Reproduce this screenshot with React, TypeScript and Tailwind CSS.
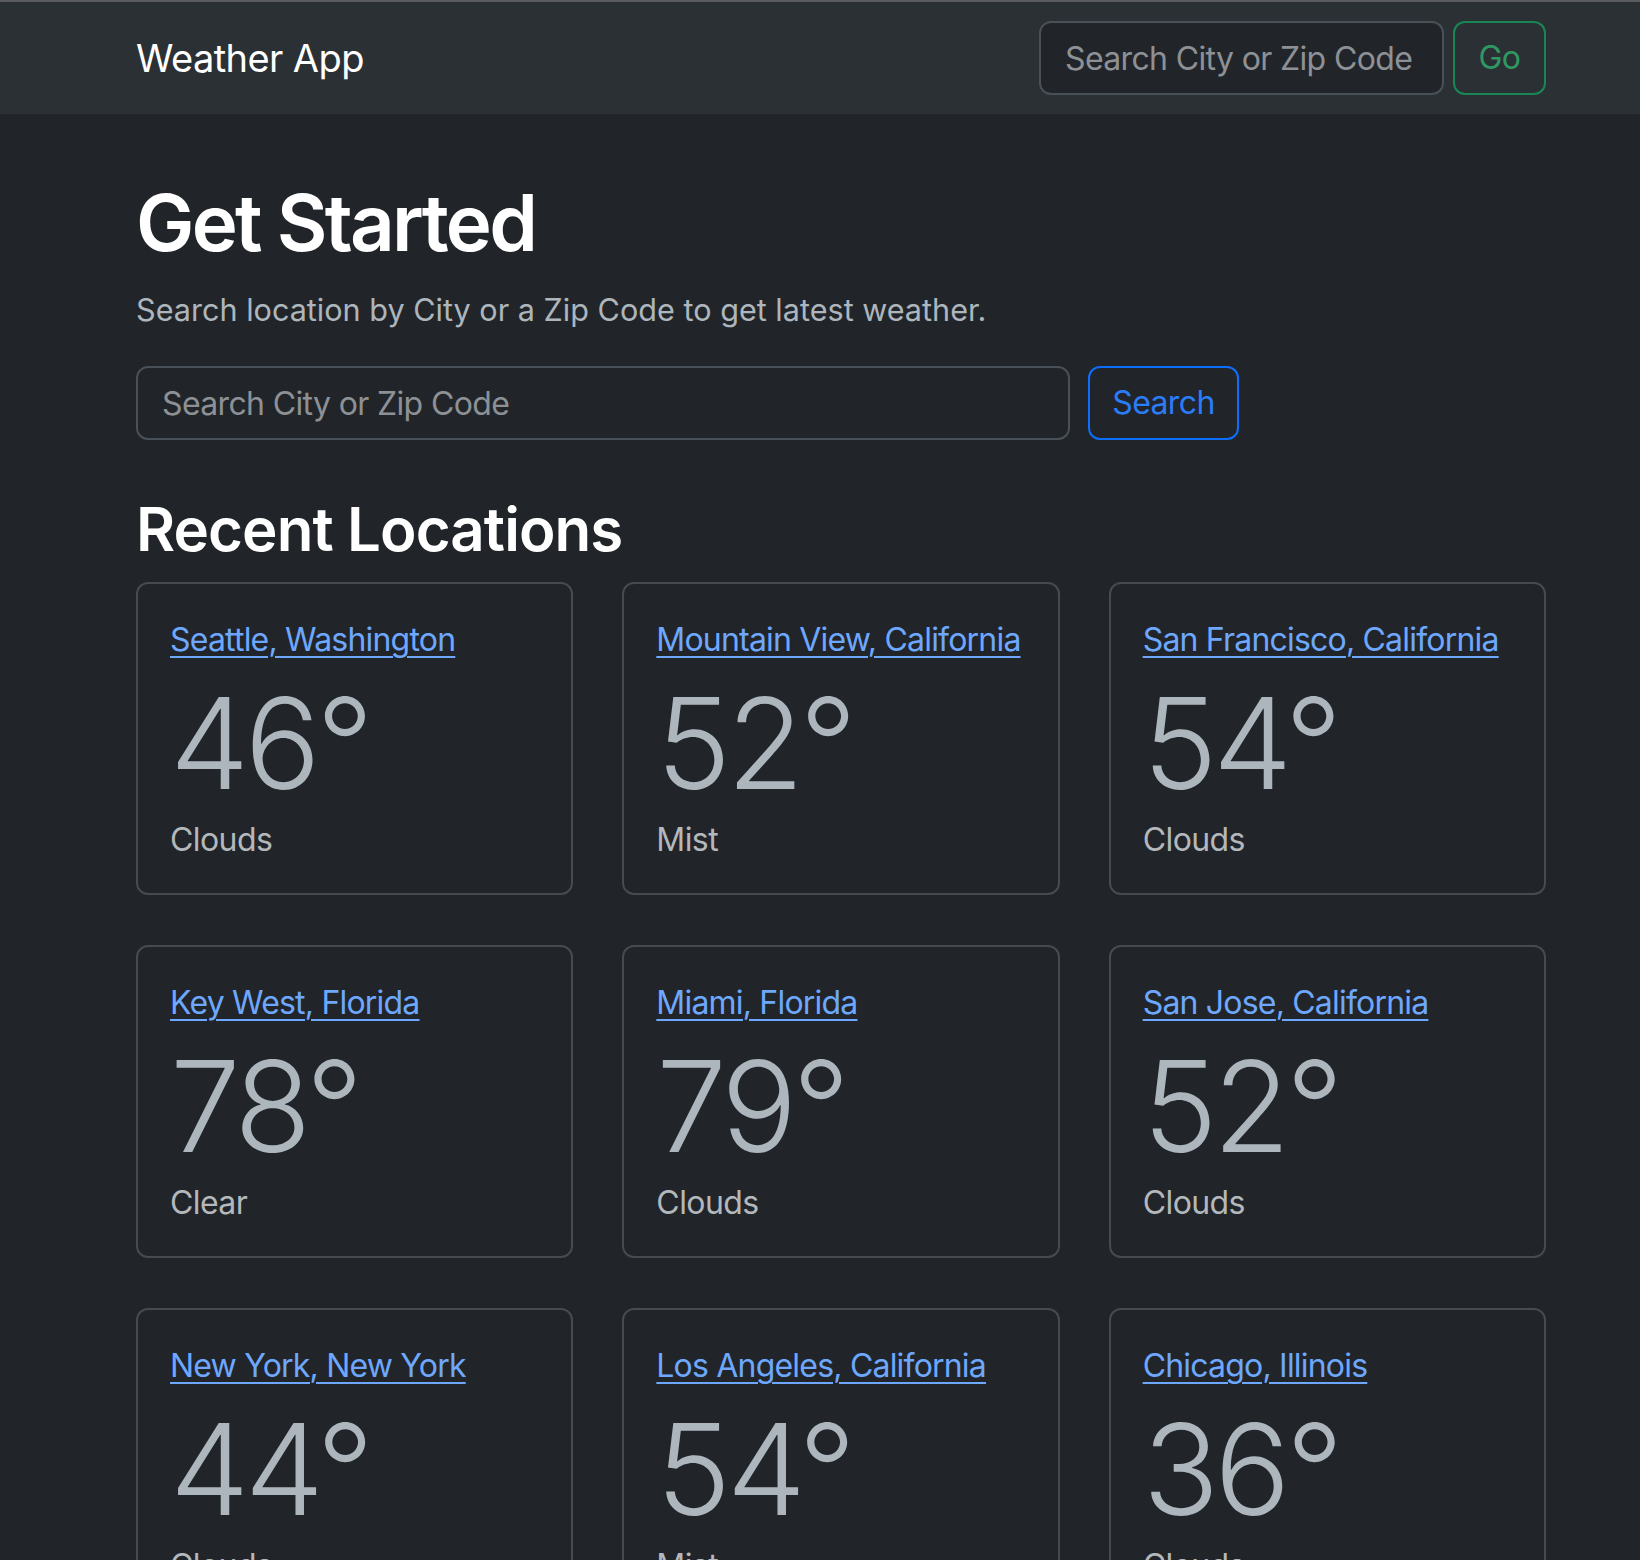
import React from 'react';

// Dados das localizações recentes
const locations = [
  { name: 'Seattle, Washington', temp: 46, desc: 'Clouds' },
  { name: 'Mountain View, California', temp: 52, desc: 'Mist' },
  { name: 'San Francisco, California', temp: 54, desc: 'Clouds' },
  { name: 'Key West, Florida', temp: 78, desc: 'Clear' },
  { name: 'Miami, Florida', temp: 79, desc: 'Clouds' },
  { name: 'San Jose, California', temp: 52, desc: 'Clouds' },
  { name: 'New York, New York', temp: 44, desc: 'Clouds' },
  { name: 'Los Angeles, California', temp: 54, desc: 'Mist' },
  { name: 'Chicago, Illinois', temp: 36, desc: 'Clouds' },
];

const LocationCard = ({ name, temp, desc }: { name: string; temp: number; desc: string }) => (
  <div className="h-[313px] rounded-[12px] border-2 border-[#474a4e] p-[32px]">
    <a
      href="#"
      className="block whitespace-nowrap text-[32px] leading-[48px] tracking-[-0.025em] text-[#6ea8fe] underline decoration-2 underline-offset-[5px]"
    >
      {name}
    </a>
    <div className="mt-[16px] text-[126px] font-light leading-[126px] tracking-[-0.035em] text-[#adb5bd]">{temp}°</div>
    <p className="mt-[10px] text-[32px] leading-[48px] tracking-[-0.018em] text-[#b4b8bc]">{desc}</p>
  </div>
);

const App = () => {
  return (
    <div className="min-h-[1560px] overflow-hidden bg-[#212529] font-['Inter',sans-serif] text-[#dee2e6]">
      {/* Barra de navegação */}
      <nav className="h-[114px] border-t-2 border-[#5a5c60] bg-[#2b3035]">
        <div className="ml-[136px] flex h-full w-[1410px] items-center justify-between">
          <a href="#" className="text-[38px] tracking-[-0.015em] text-white">Weather App</a>
          <form className="flex items-center gap-[9px]">
            <input
              className="h-[74px] w-[405px] rounded-[12px] border-2 border-[#495057] bg-[#212529] px-[24px] text-[32px] tracking-[-0.02em] text-[#dee2e6] outline-none placeholder:text-[#8d9196]"
              placeholder="Search City or Zip Code"
            />
            <button type="button" className="h-[74px] w-[93px] rounded-[12px] border-2 border-[#198754] text-[32px] tracking-[-0.02em] text-[#2f9862]">
              Go
            </button>
          </form>
        </div>
      </nav>

      {/* Conteúdo principal */}
      <main className="ml-[136px] w-[1410px] pt-[62px]">
        <h1 className="text-[78px] font-semibold leading-[94px] tracking-[-0.035em] text-white">Get Started</h1>
        <p className="mt-[17px] text-[30.6px] leading-[45px] text-[#adb5bd]">
          Search location by City or a Zip Code to get latest weather.
        </p>
        <form className="mt-[34px] flex items-center gap-[18px]">
          <input
            className="h-[74px] w-[934px] rounded-[12px] border-2 border-[#495057] bg-[#212529] px-[24px] text-[32px] tracking-[-0.02em] text-[#dee2e6] outline-none placeholder:text-[#8d9196]"
            placeholder="Search City or Zip Code"
          />
          <button type="button" className="h-[74px] w-[151px] rounded-[12px] border-2 border-[#0d6efd] text-[32px] tracking-[-0.02em] text-[#2a7cf7]">
            Search
          </button>
        </form>

        <h2 className="mt-[53px] text-[60px] font-semibold leading-[72px] tracking-[-0.015em] text-white">Recent Locations</h2>
        <div className="mt-[17px] grid grid-cols-3 gap-x-[49px] gap-y-[50px]">
          {locations.map((loc) => (
            <LocationCard key={loc.name} {...loc} />
          ))}
        </div>
      </main>
    </div>
  );
};

export default App;
